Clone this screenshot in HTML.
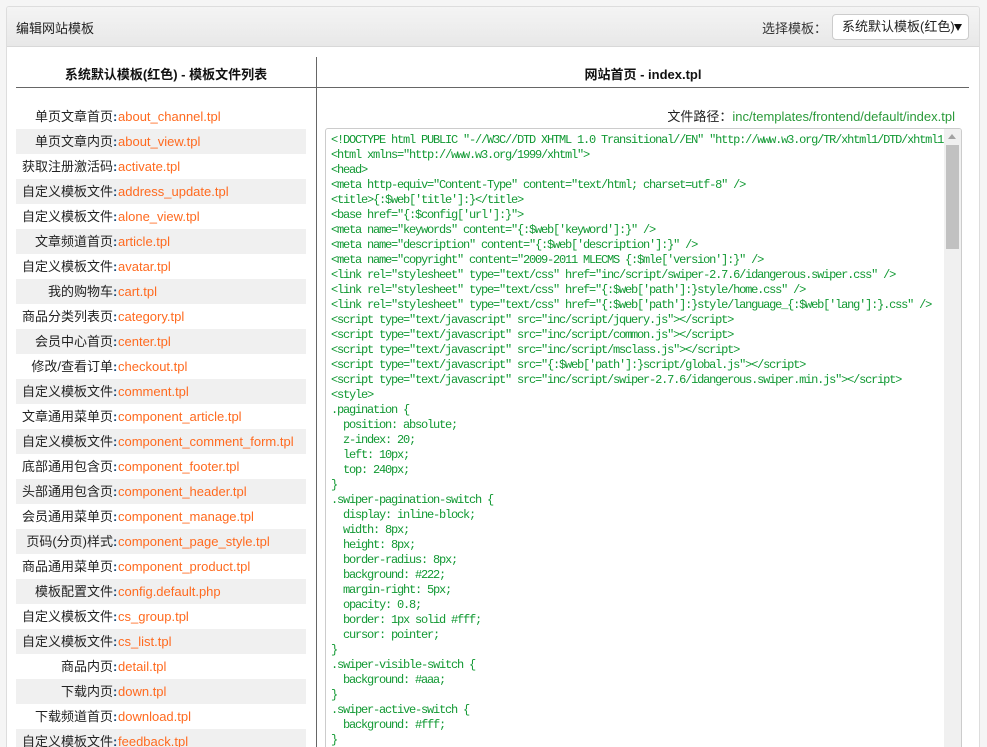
<!DOCTYPE html>
<html><head><meta charset="utf-8"><style>
*{margin:0;padding:0;box-sizing:border-box}
html,body{width:987px;height:747px;overflow:hidden}
body{background:#f5f5f5;font-family:"Liberation Sans","Noto Sans CJK SC",sans-serif;font-size:13px;color:#333;position:relative}
.panel{position:absolute;left:6px;top:6px;width:974px;height:745px;background:#fff;border:1px solid #ddd;border-radius:3px;overflow:hidden}
.hd{height:40px;background:linear-gradient(#f4f4f4,#e8e8e8);border-bottom:1px solid #d8d8d8;position:relative}
.hd .t{position:absolute;left:9px;top:11px;font-size:13px;color:#222}
.hd .s{position:absolute;left:755px;top:11px;font-size:13px;color:#333}
.sel{position:absolute;left:825px;top:7px;width:137px;height:26px;border:1px solid #ccc;border-radius:4px;background:#fff;font-size:13px;line-height:24px;padding:0 0 0 9px;color:#222;white-space:nowrap}
.sel:after{content:"";position:absolute;right:6px;top:9px;border-left:4px solid transparent;border-right:4px solid transparent;border-top:7px solid #111}
.vdiv{position:absolute;left:309px;top:50px;width:1px;height:720px;background:#666}
.h1{position:absolute;top:57px;font-weight:bold;font-size:13px;color:#111;text-align:center}
.line{position:absolute;top:80px;height:1px;background:#666}
.list{position:absolute;left:9px;top:97px;width:290px}
.row{height:25px;line-height:25px;font-size:13px;white-space:nowrap}
.row:nth-child(even){background:#f0f0f0}
.row .l{display:inline-block;width:97px;text-align:right;color:#222}
.row .c{display:inline-block;width:5px;color:#1a4a7a;font-weight:bold}
.row .f{color:#ff6a1f}
.path{position:absolute;right:24px;top:99px;font-size:13px;color:#222}
.path span{color:#2a9a3a}
.code{position:absolute;left:318px;top:121px;width:637px;height:640px;border:1px solid #ccc;border-radius:3px;overflow:hidden;background:#fff}
.code pre{position:absolute;left:5px;top:4px;font-family:"Liberation Mono",monospace;font-size:12px;letter-spacing:-1.2px;line-height:15px;color:#119933}
.sb{position:absolute;right:0;top:0;width:17px;height:100%;background:#f0f0f0}
.sb .th{position:absolute;left:2px;top:16px;width:13px;height:104px;background:#c1c1c1}
.sb .ar{position:absolute;left:4px;top:5px;border-left:4px solid transparent;border-right:4px solid transparent;border-bottom:5px solid #a3a3a3}
</style></head><body>
<div class="panel">
<div class="hd"><div class="t">编辑网站模板</div><div class="s">选择模板：</div><div class="sel">系统默认模板(红色)</div></div>
<div class="h1" style="left:9px;width:300px">系统默认模板(红色) - 模板文件列表</div>
<div class="line" style="left:9px;width:300px"></div>
<div class="h1" style="left:310px;width:652px">网站首页 - index.tpl</div>
<div class="line" style="left:310px;width:652px"></div>
<div class="vdiv"></div>
<div class="list">
<div class="row"><span class="l">单页文章首页</span><span class="c">:</span><span class="f">about_channel.tpl</span></div>
<div class="row"><span class="l">单页文章内页</span><span class="c">:</span><span class="f">about_view.tpl</span></div>
<div class="row"><span class="l">获取注册激活码</span><span class="c">:</span><span class="f">activate.tpl</span></div>
<div class="row"><span class="l">自定义模板文件</span><span class="c">:</span><span class="f">address_update.tpl</span></div>
<div class="row"><span class="l">自定义模板文件</span><span class="c">:</span><span class="f">alone_view.tpl</span></div>
<div class="row"><span class="l">文章频道首页</span><span class="c">:</span><span class="f">article.tpl</span></div>
<div class="row"><span class="l">自定义模板文件</span><span class="c">:</span><span class="f">avatar.tpl</span></div>
<div class="row"><span class="l">我的购物车</span><span class="c">:</span><span class="f">cart.tpl</span></div>
<div class="row"><span class="l">商品分类列表页</span><span class="c">:</span><span class="f">category.tpl</span></div>
<div class="row"><span class="l">会员中心首页</span><span class="c">:</span><span class="f">center.tpl</span></div>
<div class="row"><span class="l">修改/查看订单</span><span class="c">:</span><span class="f">checkout.tpl</span></div>
<div class="row"><span class="l">自定义模板文件</span><span class="c">:</span><span class="f">comment.tpl</span></div>
<div class="row"><span class="l">文章通用菜单页</span><span class="c">:</span><span class="f">component_article.tpl</span></div>
<div class="row"><span class="l">自定义模板文件</span><span class="c">:</span><span class="f">component_comment_form.tpl</span></div>
<div class="row"><span class="l">底部通用包含页</span><span class="c">:</span><span class="f">component_footer.tpl</span></div>
<div class="row"><span class="l">头部通用包含页</span><span class="c">:</span><span class="f">component_header.tpl</span></div>
<div class="row"><span class="l">会员通用菜单页</span><span class="c">:</span><span class="f">component_manage.tpl</span></div>
<div class="row"><span class="l">页码(分页)样式</span><span class="c">:</span><span class="f">component_page_style.tpl</span></div>
<div class="row"><span class="l">商品通用菜单页</span><span class="c">:</span><span class="f">component_product.tpl</span></div>
<div class="row"><span class="l">模板配置文件</span><span class="c">:</span><span class="f">config.default.php</span></div>
<div class="row"><span class="l">自定义模板文件</span><span class="c">:</span><span class="f">cs_group.tpl</span></div>
<div class="row"><span class="l">自定义模板文件</span><span class="c">:</span><span class="f">cs_list.tpl</span></div>
<div class="row"><span class="l">商品内页</span><span class="c">:</span><span class="f">detail.tpl</span></div>
<div class="row"><span class="l">下载内页</span><span class="c">:</span><span class="f">down.tpl</span></div>
<div class="row"><span class="l">下载频道首页</span><span class="c">:</span><span class="f">download.tpl</span></div>
<div class="row"><span class="l">自定义模板文件</span><span class="c">:</span><span class="f">feedback.tpl</span></div>
</div>
<div class="path">文件路径：<span>inc/templates/frontend/default/index.tpl</span></div>
<div class="code"><pre>&lt;!DOCTYPE html PUBLIC "-//W3C//DTD XHTML 1.0 Transitional//EN" "http://www.w3.org/TR/xhtml1/DTD/xhtml1-transitional.dtd"&gt;
&lt;html xmlns="http://www.w3.org/1999/xhtml"&gt;
&lt;head&gt;
&lt;meta http-equiv="Content-Type" content="text/html; charset=utf-8" /&gt;
&lt;title&gt;{:$web['title']:}&lt;/title&gt;
&lt;base href="{:$config['url']:}"&gt;
&lt;meta name="keywords" content="{:$web['keyword']:}" /&gt;
&lt;meta name="description" content="{:$web['description']:}" /&gt;
&lt;meta name="copyright" content="2009-2011 MLECMS {:$mle['version']:}" /&gt;
&lt;link rel="stylesheet" type="text/css" href="inc/script/swiper-2.7.6/idangerous.swiper.css" /&gt;
&lt;link rel="stylesheet" type="text/css" href="{:$web['path']:}style/home.css" /&gt;
&lt;link rel="stylesheet" type="text/css" href="{:$web['path']:}style/language_{:$web['lang']:}.css" /&gt;
&lt;script type="text/javascript" src="inc/script/jquery.js"&gt;&lt;/script&gt;
&lt;script type="text/javascript" src="inc/script/common.js"&gt;&lt;/script&gt;
&lt;script type="text/javascript" src="inc/script/msclass.js"&gt;&lt;/script&gt;
&lt;script type="text/javascript" src="{:$web['path']:}script/global.js"&gt;&lt;/script&gt;
&lt;script type="text/javascript" src="inc/script/swiper-2.7.6/idangerous.swiper.min.js"&gt;&lt;/script&gt;
&lt;style&gt;
.pagination {
  position: absolute;
  z-index: 20;
  left: 10px;
  top: 240px;
}
.swiper-pagination-switch {
  display: inline-block;
  width: 8px;
  height: 8px;
  border-radius: 8px;
  background: #222;
  margin-right: 5px;
  opacity: 0.8;
  border: 1px solid #fff;
  cursor: pointer;
}
.swiper-visible-switch {
  background: #aaa;
}
.swiper-active-switch {
  background: #fff;
}
</pre><div class="sb"><div class="ar"></div><div class="th"></div></div></div>
</div>
</body></html>
